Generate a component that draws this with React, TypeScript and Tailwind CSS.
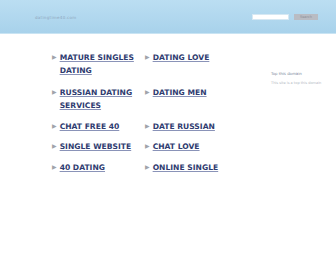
import React from 'react';

const col1 = [['MATURE SINGLES', 'DATING'], ['RUSSIAN DATING', 'SERVICES'], ['CHAT FREE 40'], ['SINGLE WEBSITE'], ['40 DATING']];
const col2 = [['DATING LOVE'], ['DATING MEN'], ['DATE RUSSIAN'], ['CHAT LOVE'], ['ONLINE SINGLE']];
const rowH = ['h-[35px]', 'h-[34px]', 'h-[20px]', 'h-[21px]', 'h-[20px]'];

function Link({ lines }: { lines: string[] }) {
  return (
    <div className="flex gap-[3px]">
      <span className="text-[6px] leading-[12px] text-[#a0a4aa]">▶</span>
      <div className="text-[7.6px] leading-[13px] font-bold text-[#2f3c70] underline decoration-[#8a93b8] underline-offset-1">
        {lines.map((l) => (
          <div key={l}>{l}</div>
        ))}
      </div>
    </div>
  );
}

export default function App() {
  return (
    <div className="w-[336px] h-[280px] bg-white overflow-hidden" style={{ fontFamily: '"DejaVu Sans", Verdana, sans-serif' }}>
      <header className="h-[34px] bg-gradient-to-b from-[#bbdef2] to-[#a8d2eb] border-b border-[#c9e4f3] flex items-center">
        <div className="ml-[35px] mt-[3px] text-[4px] leading-none text-[#8ea6bc] tracking-[0.3px]">datingtime40.com</div>
        <div className="ml-auto flex items-center gap-[5px] mr-[18px]">
          <div className="w-[37px] h-[6px] bg-white border border-[#d6e8f3]" />
          <div className="w-[24px] h-[6px] bg-[#b9bcc3] text-[3.5px] leading-[6px] text-[#8b8f98] text-center">Search</div>
        </div>
      </header>
      <div className="flex mt-[17px]">
        <div className="ml-[52px] w-[93px]">
          {col1.map((lines, i) => (
            <div key={i} className={rowH[i]}>
              <Link lines={lines} />
            </div>
          ))}
        </div>
        <div className="w-[100px]">
          {col2.map((lines, i) => (
            <div key={i} className={rowH[i]}>
              <Link lines={lines} />
            </div>
          ))}
        </div>
        <div className="ml-[26px] mt-[21px] flex flex-col gap-[6px] text-[3.5px] leading-none">
          <div className="text-[3.9px] text-[#7c879a]">Top this domain</div>
          <div className="text-[#b5bbc4]">This site is a top this domain</div>
        </div>
      </div>
    </div>
  );
}
